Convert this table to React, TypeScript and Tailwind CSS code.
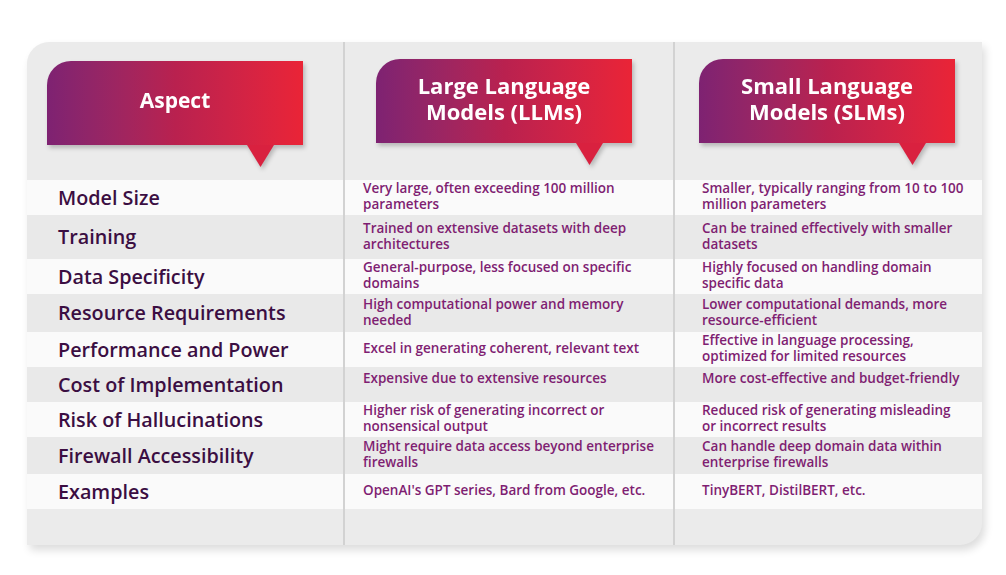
import React from "react";

type Row = {
  aspect: string;
  llm: string;
  slm: string;
  h: string;
  shade: boolean;
  top?: boolean;
};

const rows: Row[] = [
  { aspect: "Model Size", llm: "Very large, often exceeding 100 million parameters", slm: "Smaller, typically ranging from 10 to 100 million parameters", h: "h-[35px]", shade: false },
  { aspect: "Training", llm: "Trained on extensive datasets with deep architectures", slm: "Can be trained effectively with smaller datasets", h: "h-[44px]", shade: true },
  { aspect: "Data Specificity", llm: "General-purpose, less focused on specific domains", slm: "Highly focused on handling domain specific data", h: "h-[35px]", shade: false },
  { aspect: "Resource Requirements", llm: "High computational power and memory needed", slm: "Lower computational demands, more resource-efficient", h: "h-[38px]", shade: true },
  { aspect: "Performance and Power", llm: "Excel in generating coherent, relevant text", slm: "Effective in language processing, optimized for limited resources", h: "h-[35px]", shade: false },
  { aspect: "Cost of Implementation", llm: "Expensive due to extensive resources", slm: "More cost-effective and budget-friendly", h: "h-[35px]", shade: true, top: true },
  { aspect: "Risk of Hallucinations", llm: "Higher risk of generating incorrect or nonsensical output", slm: "Reduced risk of generating misleading or incorrect results", h: "h-[35px]", shade: false },
  { aspect: "Firewall Accessibility", llm: "Might require data access beyond enterprise firewalls", slm: "Can handle deep domain data within enterprise firewalls", h: "h-[37px]", shade: true },
  { aspect: "Examples", llm: "OpenAI's GPT series, Bard from Google, etc.", slm: "TinyBERT, DistilBERT, etc.", h: "h-[35px]", shade: false },
];

const Bubble = ({ lines, size }: { lines: string[]; size: string }) => (
  <div className="relative w-[256px] drop-shadow-[2px_3px_2px_rgba(0,0,0,0.22)]">
    <div className="h-[84px] pb-[6px] rounded-tl-[24px] bg-gradient-to-r from-[#7e2272] via-[#b9214f] to-[#ea2436] flex flex-col items-center justify-center">
      {lines.map((l) => (
        <span key={l} className={`${size} font-bold text-white leading-[26px]`}>
          {l}
        </span>
      ))}
    </div>
    <div className="absolute left-[200px] top-full w-[27px] h-[22px] bg-[#d9213f] [clip-path:polygon(0_0,100%_0,50%_100%)]" />
  </div>
);

export default function App() {
  return (
    <div className="w-[1006px] h-[575px] bg-white pt-[42px] pl-[27px] font-['Open_Sans',sans-serif]">
      <div className="w-[955px] h-[503px] bg-[#ebebeb] rounded-tl-[22px] rounded-br-[22px] overflow-hidden shadow-[3px_5px_8px_rgba(0,0,0,0.14)] flex flex-col">
        {/* header */}
        <div className="grid grid-cols-[316px_330px_309px] h-[138px]">
          <div className="pl-[20px] pt-[19px]">
            <Bubble lines={["Aspect"]} size="text-[21px]" />
          </div>
          <div className="border-l-2 border-[#d2d2d2] pl-[31px] pt-[17px]">
            <Bubble lines={["Large Language", "Models (LLMs)"]} size="text-[22px]" />
          </div>
          <div className="border-l-2 border-[#d2d2d2] pl-[24px] pt-[17px]">
            <Bubble lines={["Small Language", "Models (SLMs)"]} size="text-[22px]" />
          </div>
        </div>

        {/* rows */}
        {rows.map((r) => (
          <div
            key={r.aspect}
            className={`grid grid-cols-[316px_330px_309px] ${r.h} ${r.shade ? "bg-[#e9e9e9]" : "bg-[#fafafa]"}`}
          >
            <div className="pl-[31px] flex items-center text-[19.75px] font-semibold text-[#3b0e42]">
              {r.aspect}
            </div>
            <div
              className={`border-l-2 border-[#d2d2d2] pl-[18px] pr-[8px] flex ${r.top ? "items-start pt-[3px]" : "items-center pb-[3px]"} text-[13.5px] font-semibold leading-[16px] text-[#7f1e72]`}
            >
              {r.llm}
            </div>
            <div
              className={`border-l-2 border-[#d2d2d2] pl-[27px] pr-[16px] flex ${r.top ? "items-start pt-[3px]" : "items-center pb-[3px]"} text-[13.5px] font-semibold leading-[16px] text-[#7f1e72]`}
            >
              {r.slm}
            </div>
          </div>
        ))}

        {/* footer */}
        <div className="grid grid-cols-[316px_330px_309px] flex-1">
          <div />
          <div className="border-l-2 border-[#d2d2d2]" />
          <div className="border-l-2 border-[#d2d2d2]" />
        </div>
      </div>
    </div>
  );
}
